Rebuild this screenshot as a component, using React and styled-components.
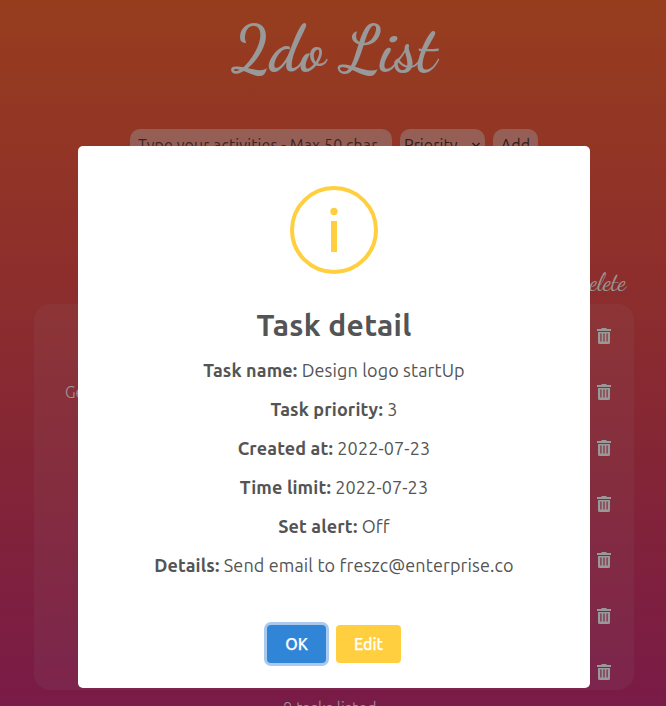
import React from "react";
import styled, { createGlobalStyle } from "styled-components";

const sans = `Ubuntu, "Noto Sans", sans-serif`;
const script = `"Dancing Script", "Liberation Serif", cursive`;

const GlobalStyle = createGlobalStyle`
  * { box-sizing: border-box; }
  html, body { margin: 0; height: 100%; overflow: hidden; }
  body { font-family: ${sans}; font-size: 16px; }
`;

const Page = styled.main`
  height: 706px;
  padding-left: 2px;
  overflow: hidden;
  display: flex;
  flex-direction: column;
  align-items: center;
  color: #fff;
  background: linear-gradient(180deg, #fc6733 0%, #ee5048 35%, #db3d5d 68%, #ca2d78 100%);
`;

const Title = styled.h1`
  flex: none;
  margin: 0;
  height: 129px;
  padding-top: 14px;
  font: 700 64px/72px ${script};
  white-space: nowrap;
`;

const Form = styled.form`
  flex: none;
  display: flex;
  gap: 8px;
  height: 139px;
`;

const field = `
  height: 32px;
  border: 0;
  border-radius: 10px;
  background: rgba(255, 255, 255, 0.42);
  color: #50302f;
  font: 400 16px/32px ${sans};
  letter-spacing: 0.1px;
`;

const Input = styled.input`
  ${field}
  width: 262px;
  padding: 0 8px;
  &::placeholder { color: #6d3936; opacity: 1; }
`;

const Select = styled.div`
  ${field}
  width: 85px;
  padding: 0 4px;
  display: flex;
  align-items: center;
  justify-content: space-between;
`;

const AddButton = styled.button`
  ${field}
  width: 45px;
  padding: 0;
`;

const TableHead = styled.div`
  flex: none;
  width: 600px;
  height: 36px;
  padding-right: 8px;
  text-align: right;
  font: 400 24px/30px ${script};
`;

const List = styled.section`
  flex: none;
  width: 600px;
  height: 386px;
  padding-top: 4px;
  overflow: hidden;
  border-radius: 16px;
  background: rgba(255, 255, 255, 0.08);
`;

const Row = styled.div`
  height: 56px;
  padding: 0 21px 0 31px;
  display: flex;
  align-items: center;
  justify-content: space-between;
  font-weight: 300;
`;

const Footer = styled.footer`
  flex: none;
  margin-top: 6px;
  padding-right: 8px;
  font-size: 16px;
  line-height: 24px;
  font-weight: 300;
  letter-spacing: 0.2px;
`;

const Overlay = styled.div`
  position: fixed;
  inset: 0;
  display: flex;
  align-items: flex-start;
  justify-content: center;
  padding: 146px 0 0 2px;
  background: rgba(0, 0, 0, 0.4);
`;

const Dialog = styled.div`
  width: 512px;
  height: 542px;
  padding-top: 40px;
  display: flex;
  flex-direction: column;
  align-items: center;
  border-radius: 5px;
  background: #fff;
  color: #545454;
`;

const DialogTitle = styled.h2`
  margin: 29px 0 10px;
  font-size: 30px;
  line-height: 44px;
  font-weight: 700;
  letter-spacing: 0.3px;
  white-space: nowrap;
`;

const Details = styled.div`
  display: flex;
  flex-direction: column;
  align-items: center;
`;

const Detail = styled.p`
  margin: 0;
  height: 39px;
  font-size: 18px;
  line-height: 27px;
  letter-spacing: 0.13px;
  white-space: nowrap;
`;

const Actions = styled.div`
  display: flex;
  gap: 10px;
  margin-top: 34px;
`;

const Button = styled.button`
  width: ${(p) => p.$width}px;
  height: 38px;
  padding: 0;
  border: 0;
  border-radius: 4px;
  color: #fff;
  font: 500 16px/36px ${sans};
  -webkit-text-stroke: 0.25px #fff;
  background: ${(p) => (p.$primary ? "#3085d6" : "#ffcf3f")};
  box-shadow: ${(p) => (p.$primary ? "0 0 0 3px #a9c9ed" : "none")};
`;

const TrashIcon = () => (
  <svg width="18" height="18" viewBox="0 0 18 18" fill="#fff">
    <path d="M2 2h4l1-1h4l1 1h4v2H2z" />
    <path
      fillRule="evenodd"
      d="M3 5h12v10.500a1.500 1.500 0 0 1-1.500 1.500h-9A1.500 1.500 0 0 1 3 15.500zM5.300 6.500v8h1.200v-8zM8.400 6.500v8h1.200v-8zM11.500 6.500v8h1.200v-8z"
    />
  </svg>
);

const InfoIcon = () => (
  <svg width="88" height="88" viewBox="0 0 88 88" fill="none">
    <circle cx="44" cy="44" r="42" stroke="#ffcf3f" strokeWidth="4" />
    <circle cx="44" cy="25.500" r="3.700" fill="#ffcf3f" />
    <path d="M41 35h6v31h-6z" fill="#ffcf3f" />
  </svg>
);

const Chevron = () => (
  <svg width="10" height="10" viewBox="0 0 10 10" fill="none" stroke="currentColor" strokeWidth="1.500">
    <path d="M1.500 3L5 6.500L8.500 3" />
  </svg>
);

const rows = ["", "Ge", "", "", "", "", ""];

const details = [
  { label: "Task name:", value: "Design logo startUp" },
  { label: "Task priority:", value: "3" },
  { label: "Created at:", value: "2022-07-23" },
  { label: "Time limit:", value: "2022-07-23" },
  { label: "Set alert:", value: "Off" },
  { label: "Details:", value: "Send email to freszc@enterprise.co" },
];

export default function App() {
  return (
    <>
      <GlobalStyle />
      <Page>
        <Title>2do List</Title>
        <Form>
          <Input placeholder="Type your activities - Max 50 char." />
          <Select>Priority <Chevron /></Select>
          <AddButton type="button">Add</AddButton>
        </Form>
        <TableHead>Delete</TableHead>
        <List>
          {rows.map((name, i) => (
            <Row key={i}>
              <span>{name}</span>
              <TrashIcon />
            </Row>
          ))}
        </List>
        <Footer>9 tasks listed</Footer>
      </Page>
      <Overlay>
        <Dialog role="dialog">
          <InfoIcon />
          <DialogTitle>Task detail</DialogTitle>
          <Details>
            {details.map((d) => (
              <Detail key={d.label}>
                <b>{d.label}</b> {d.value}
              </Detail>
            ))}
          </Details>
          <Actions>
            <Button $primary $width={59}>OK</Button>
            <Button $width={65}>Edit</Button>
          </Actions>
        </Dialog>
      </Overlay>
    </>
  );
}
